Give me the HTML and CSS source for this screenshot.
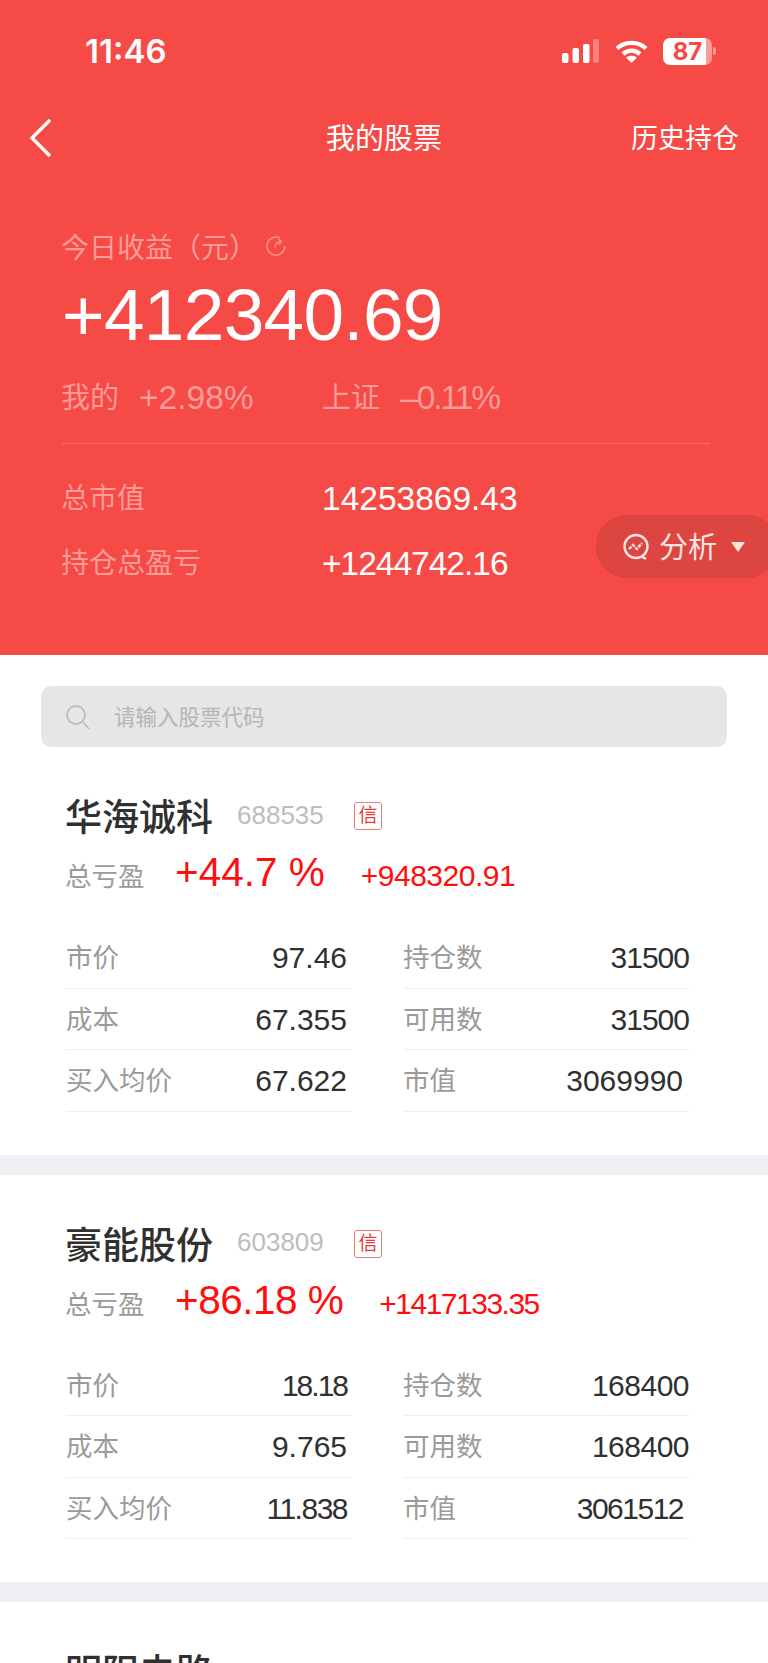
FILE: index.html
```html
<!DOCTYPE html>
<html lang="en">
<head>
  <meta charset="UTF-8">
  <title>我的股票</title>
  <link rel="stylesheet" href="styles.css">
</head>
<body>

  <header class="hero">
    <div class="status">
      <span class="time">11:46</span>
      <div class="status-icons">
        <svg class="signal" width="37" height="24" viewBox="0 0 37 24">
          <rect x="0" y="14" width="6.5" height="10" rx="2" fill="#fff"/>
          <rect x="10.5" y="9" width="6.5" height="15" rx="2" fill="#fff"/>
          <rect x="21" y="5" width="6.5" height="19" rx="2" fill="#fff"/>
          <rect x="31" y="0" width="6" height="24" rx="2" fill="#fff" opacity="0.3"/>
        </svg>
        <svg class="wifi" width="33" height="23" viewBox="0 0 33 23">
          <path d="M2 8.5 C10 1 23 1 31 8.5" fill="none" stroke="#fff" stroke-width="4.4"/>
          <path d="M8 14 C13 9.5 20 9.5 25 14" fill="none" stroke="#fff" stroke-width="4.4"/>
          <path d="M16.5 23 L11 17.5 C14 15 19 15 22 17.5 Z" fill="#fff"/>
        </svg>
        <div class="battery">87</div>
        <span class="battery-cap"></span>
      </div>
    </div>

    <div class="nav">
      <svg class="back" width="24" height="40" viewBox="0 0 24 40">
        <path d="M21 2 L3 20 L21 38" fill="none" stroke="#fff" stroke-width="3.4"/>
      </svg>
      <span class="nav-title">我的股票</span>
      <span class="nav-link">历史持仓</span>
    </div>

    <div class="today">
      <span>今日收益（元）</span>
      <svg width="22" height="22" viewBox="0 0 22 22">
        <path d="M15 3 A9 9 0 1 0 20 11" fill="none" stroke="#fb8f8b" stroke-width="1.6"/>
        <path d="M10 13 C10 9 12 7 16 6.5 M13 4 L16.5 6.3 L14 9.5" fill="none" stroke="#fb8f8b" stroke-width="1.4"/>
      </svg>
    </div>
    <div class="today-num">+412340.69</div>
    <div class="rates">
      <div class="rate"><span>我的</span><span class="rate-num">+2.98%</span></div>
      <div class="rate"><span>上证</span><span class="rate-num tight-4">–0.11%</span></div>
    </div>
    <div class="hero-line"></div>
    <div class="totals">
      <div class="total"><span class="total-label">总市值</span><span class="total-num">14253869.43</span></div>
      <div class="total"><span class="total-label">持仓总盈亏</span><span class="total-num tight-2">+1244742.16</span></div>
    </div>
    <div class="analyse">
      <svg width="28" height="28" viewBox="0 0 28 28">
        <circle cx="14" cy="13.5" r="11.5" fill="none" stroke="#fbe3e1" stroke-width="2.4"/>
        <path d="M19 23 L24 26" stroke="#fbe3e1" stroke-width="2.4"/>
        <path d="M7 16 L11 12 L15 16 L20 10" fill="none" stroke="#fbe3e1" stroke-width="2.4" stroke-dasharray="3.5 1"/>
      </svg>
      <span>分析</span>
      <i class="caret"></i>
    </div>
  </header>

  <div class="search-wrap">
    <div class="search">
      <svg width="26" height="28" viewBox="0 0 26 28">
        <circle cx="11" cy="12" r="9" fill="none" stroke="#bdbdbd" stroke-width="1.8"/>
        <path d="M18 19 L24 26" stroke="#bdbdbd" stroke-width="1.8"/>
      </svg>
      <span class="search-text">请输入股票代码</span>
    </div>
  </div>

  <section class="stock first">
    <div class="stock-head">
      <span class="stock-name">华海诚科</span>
      <span class="stock-code">688535</span>
      <span class="stock-tag">信</span>
    </div>
    <div class="stock-gain">
      <span class="gain-label">总亏盈</span>
      <span class="gain-pct">+44.7 %</span>
      <span class="gain-num tight-1">+948320.91</span>
    </div>
    <div class="cells">
      <div class="cell"><span>市价</span><b>97.46</b></div>
      <div class="cell"><span>持仓数</span><b class="tight-2">31500</b></div>
      <div class="cell"><span>成本</span><b>67.355</b></div>
      <div class="cell"><span>可用数</span><b class="tight-2">31500</b></div>
      <div class="cell"><span>买入均价</span><b>67.622</b></div>
      <div class="cell"><span>市值</span><b class="nudge">3069990</b></div>
    </div>
  </section>

  <section class="stock">
    <div class="stock-head">
      <span class="stock-name">豪能股份</span>
      <span class="stock-code">603809</span>
      <span class="stock-tag">信</span>
    </div>
    <div class="stock-gain">
      <span class="gain-label">总亏盈</span>
      <span class="gain-pct tight-1">+86.18 %</span>
      <span class="gain-num tight-3">+1417133.35</span>
    </div>
    <div class="cells">
      <div class="cell"><span>市价</span><b class="tight-4">18.18</b></div>
      <div class="cell"><span>持仓数</span><b class="tight-1">168400</b></div>
      <div class="cell"><span>成本</span><b>9.765</b></div>
      <div class="cell"><span>可用数</span><b class="tight-1">168400</b></div>
      <div class="cell"><span>买入均价</span><b class="tight-3">11.838</b></div>
      <div class="cell"><span>市值</span><b class="nudge tight-3">3061512</b></div>
    </div>
  </section>

  <section class="stock last">
    <div class="stock-head">
      <span class="stock-name">明阳电路</span>
    </div>
  </section>

</body>
</html>
```

FILE: styles.css
```css
html, body {
  margin: 0;
  padding: 0;
}

body {
  width: 768px;
  height: 1663px;
  overflow: hidden;
  background-color: white;
  font-family: "Liberation Sans", "Noto Sans CJK SC", sans-serif;
}

.hero {
  position: relative;
  height: 655px;
  box-sizing: border-box;
  background-color: #f54a46;
  color: white;
  padding-top: 31px;
}

.status {
  display: flex;
  justify-content: space-between;
  align-items: center;
  height: 40px;
  padding: 0 52px 0 85px;
}

.time {
  font-size: 33px;
  font-weight: 600;
  font-family: "Inter", sans-serif;
}

.status-icons {
  display: flex;
  align-items: center;
}

.signal {
  margin-right: 16px;
}

.wifi {
  margin-right: 15px;
}

.battery {
  width: 49px;
  height: 27px;
  border-radius: 7px;
  background: linear-gradient(to right, #fff 87%, #fb9c99 87%);
  color: #f54a46;
  text-align: center;
  font: bold 24px/27px "Inter", sans-serif;
}

.battery-cap {
  width: 3px;
  height: 8px;
  margin-left: 1px;
  border-radius: 0 3px 3px 0;
  background-color: #fb9c99;
}

.nav {
  display: flex;
  justify-content: space-between;
  align-items: center;
  position: relative;
  height: 50px;
  margin-top: 42px;
  padding: 0 29px;
}

.nav-title {
  position: absolute;
  left: 326px;
  font-size: 29px;
  padding-bottom: 4px;
}

.nav-link {
  font-size: 27px;
  padding-bottom: 4px;
}

.today {
  display: flex;
  align-items: center;
  margin: 63px 0 0 61px;
  height: 40px;
  font-size: 28px;
  color: #fb9c99;
}

.today svg {
  margin-left: 8px;
}

.today-num {
  margin: 8px 0 0 62px;
  font-size: 73px;
  letter-spacing: -0.7px;
  line-height: 82px;
}

.rates {
  display: flex;
  margin: 22px 0 0 61px;
  font-size: 29px;
  line-height: 40px;
  color: #fb9c99;
}

.rate {
  display: flex;
  gap: 20px;
  width: 261px;
}

.rate-num {
  font-size: 33.5px;
}

.hero-line {
  height: 1px;
  margin: 25px 58px 0 62px;
  background-color: #fa6d69;
}

.totals {
  margin: 22px 0 0 61px;
}

.total {
  display: flex;
  align-items: center;
  height: 65px;
}

.total-label {
  width: 261px;
  padding-bottom: 6px;
  font-size: 28px;
  color: #fb9c99;
}

.total-num {
  font-size: 33.5px;
}

.analyse {
  position: absolute;
  top: 515px;
  right: -10px;
  display: flex;
  align-items: center;
  gap: 9px;
  width: 182px;
  height: 63px;
  box-sizing: border-box;
  padding-left: 25px;
  border: 1px solid #d9413d;
  border-radius: 32px;
  background-color: #dd4540;
  color: #fbe3e1;
  font-size: 29px;
}

.analyse span {
  padding-bottom: 3px;
}

.caret {
  width: 0;
  height: 0;
  margin-left: 5px;
  border: 7px solid transparent;
  border-top: 10px solid #fbe3e1;
  border-bottom: 0;
}

.search-wrap {
  padding: 31px 41px 0;
}

.search {
  display: flex;
  align-items: center;
  gap: 23px;
  height: 61px;
  padding-left: 24px;
  border-radius: 10px;
  background-color: #e6e6e6;
  color: #b5b5b5;
  font-size: 21.5px;
}

.search-text {
  padding-bottom: 3px;
}

.stock {
  box-sizing: border-box;
  height: 427.5px;
  padding: 43px 64px 0 65px;
  border-top: 20px solid #efeff4;
}

.stock.first {
  border-top: 0;
  height: 407.5px;
}

.stock.last {
  height: 81px;
  overflow: hidden;
}

.stock-head {
  display: flex;
  align-items: center;
  height: 50px;
}

.stock-name {
  width: 172px;
  font-size: 37px;
  font-weight: 500;
  color: #303030;
}

.stock-code {
  width: 117px;
  font-size: 26px;
  color: #bdbdbd;
}

.stock-tag {
  width: 26px;
  height: 26px;
  line-height: 26px;
  margin-top: 2px;
  border: 1px solid #ec7b78;
  border-radius: 3px;
  text-align: center;
  font-size: 19px;
  color: #e23c38;
}

.stock-gain {
  display: flex;
  align-items: baseline;
  height: 50px;
  margin-top: 9px;
}

.gain-label {
  width: 110px;
  font-size: 26.5px;
  color: #9a9a9a;
}

.gain-pct {
  font-size: 40.5px;
  color: #ff0e0e;
  margin-right: 36px;
}

.gain-num {
  font-size: 30px;
  color: #ff0e0e;
}

.cells {
  display: grid;
  grid-template-columns: 286px 286px;
  column-gap: 51px;
  margin-top: 28px;
  margin-left: 1px;
}

.cell {
  display: flex;
  justify-content: space-between;
  align-items: center;
  height: 61.5px;
  border-bottom: 1px solid #efefef;
  box-sizing: border-box;
  font-size: 26.5px;
  color: #9a9a9a;
}

.cell span {
  padding-bottom: 3px;
}

.cell:nth-child(odd) {
  padding-right: 5px;
}

.cell b {
  padding-top: 2px;
  font-size: 30px;
  font-weight: normal;
  color: #303030;
}

.cell .nudge {
  margin-right: 6px;
}

.tight-1 { letter-spacing: -0.5px; }
.tight-2 { letter-spacing: -1px; }
.tight-3 { letter-spacing: -1.5px; }
.tight-4 { letter-spacing: -2px; }
```
